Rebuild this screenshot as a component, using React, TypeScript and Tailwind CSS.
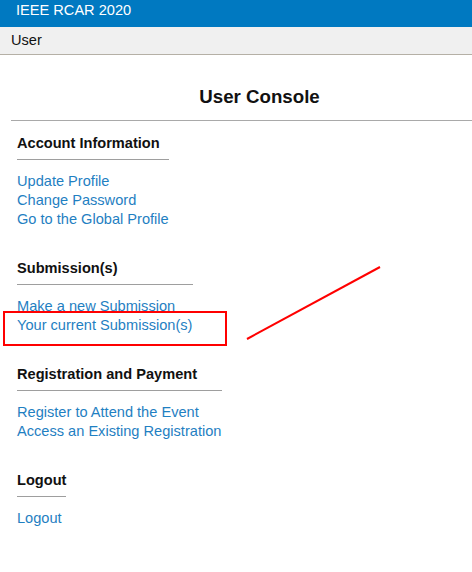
const sections = [
  {
    title: "Account Information",
    rule: "w-[152px]",
    links: ["Update Profile", "Change Password", "Go to the Global Profile"],
  },
  {
    title: "Submission(s)",
    rule: "w-[176px]",
    links: ["Make a new Submission", "Your current Submission(s)"],
  },
  {
    title: "Registration and Payment",
    rule: "w-[205px]",
    links: ["Register to Attend the Event", "Access an Existing Registration"],
  },
  {
    title: "Logout",
    rule: "w-[49px]",
    links: ["Logout"],
  },
];

export default function App() {
  return (
    <div className="relative min-h-screen overflow-hidden bg-white font-['Liberation_Sans',Arial,sans-serif] text-[14.6px] leading-[19px] text-black">
      <div className="h-[27px] bg-[#0079c1] pl-4 pt-px text-white">IEEE RCAR 2020</div>
      <div className="flex h-[28px] items-center border-b border-[#b5b0a6] bg-[#f0f0f0] px-[11px] text-[#111]">
        User
      </div>

      <div className="pl-[11px] pt-[30px]">
        <h1 className="pl-[36px] text-center text-[18.7px] font-bold leading-[24px] text-[#111]">User Console</h1>
        <div className="mt-[11px] h-px bg-[#a9a9a9]" />

        <div className="flex flex-col gap-[29.3px] pl-[6px] pt-[12.7px]">
          {sections.map((section, index) => (
            <div key={index}>
              <h4 className="font-bold text-[#111]">{section.title}</h4>
              <div className={`mt-[6.3px] h-px bg-[#9e9e9e] ${section.rule}`} />
              <div className="mt-[12.4px] flex flex-col">
                {section.links.map((link, linkIndex) => (
                  <a key={linkIndex} href="#" className="w-fit text-[#1f80c2]">
                    {link}
                  </a>
                ))}
              </div>
            </div>
          ))}
        </div>
      </div>

      {/* annotation overlay */}
      <div className="pointer-events-none absolute left-[3px] top-[311px] h-[35px] w-[224px] border-2 border-[#ff0000]" />
      <svg className="pointer-events-none absolute left-0 top-0" width="472" height="572">
        <line x1="247" y1="339" x2="380" y2="267" stroke="#ff0000" strokeWidth="2" />
      </svg>
    </div>
  );
}
